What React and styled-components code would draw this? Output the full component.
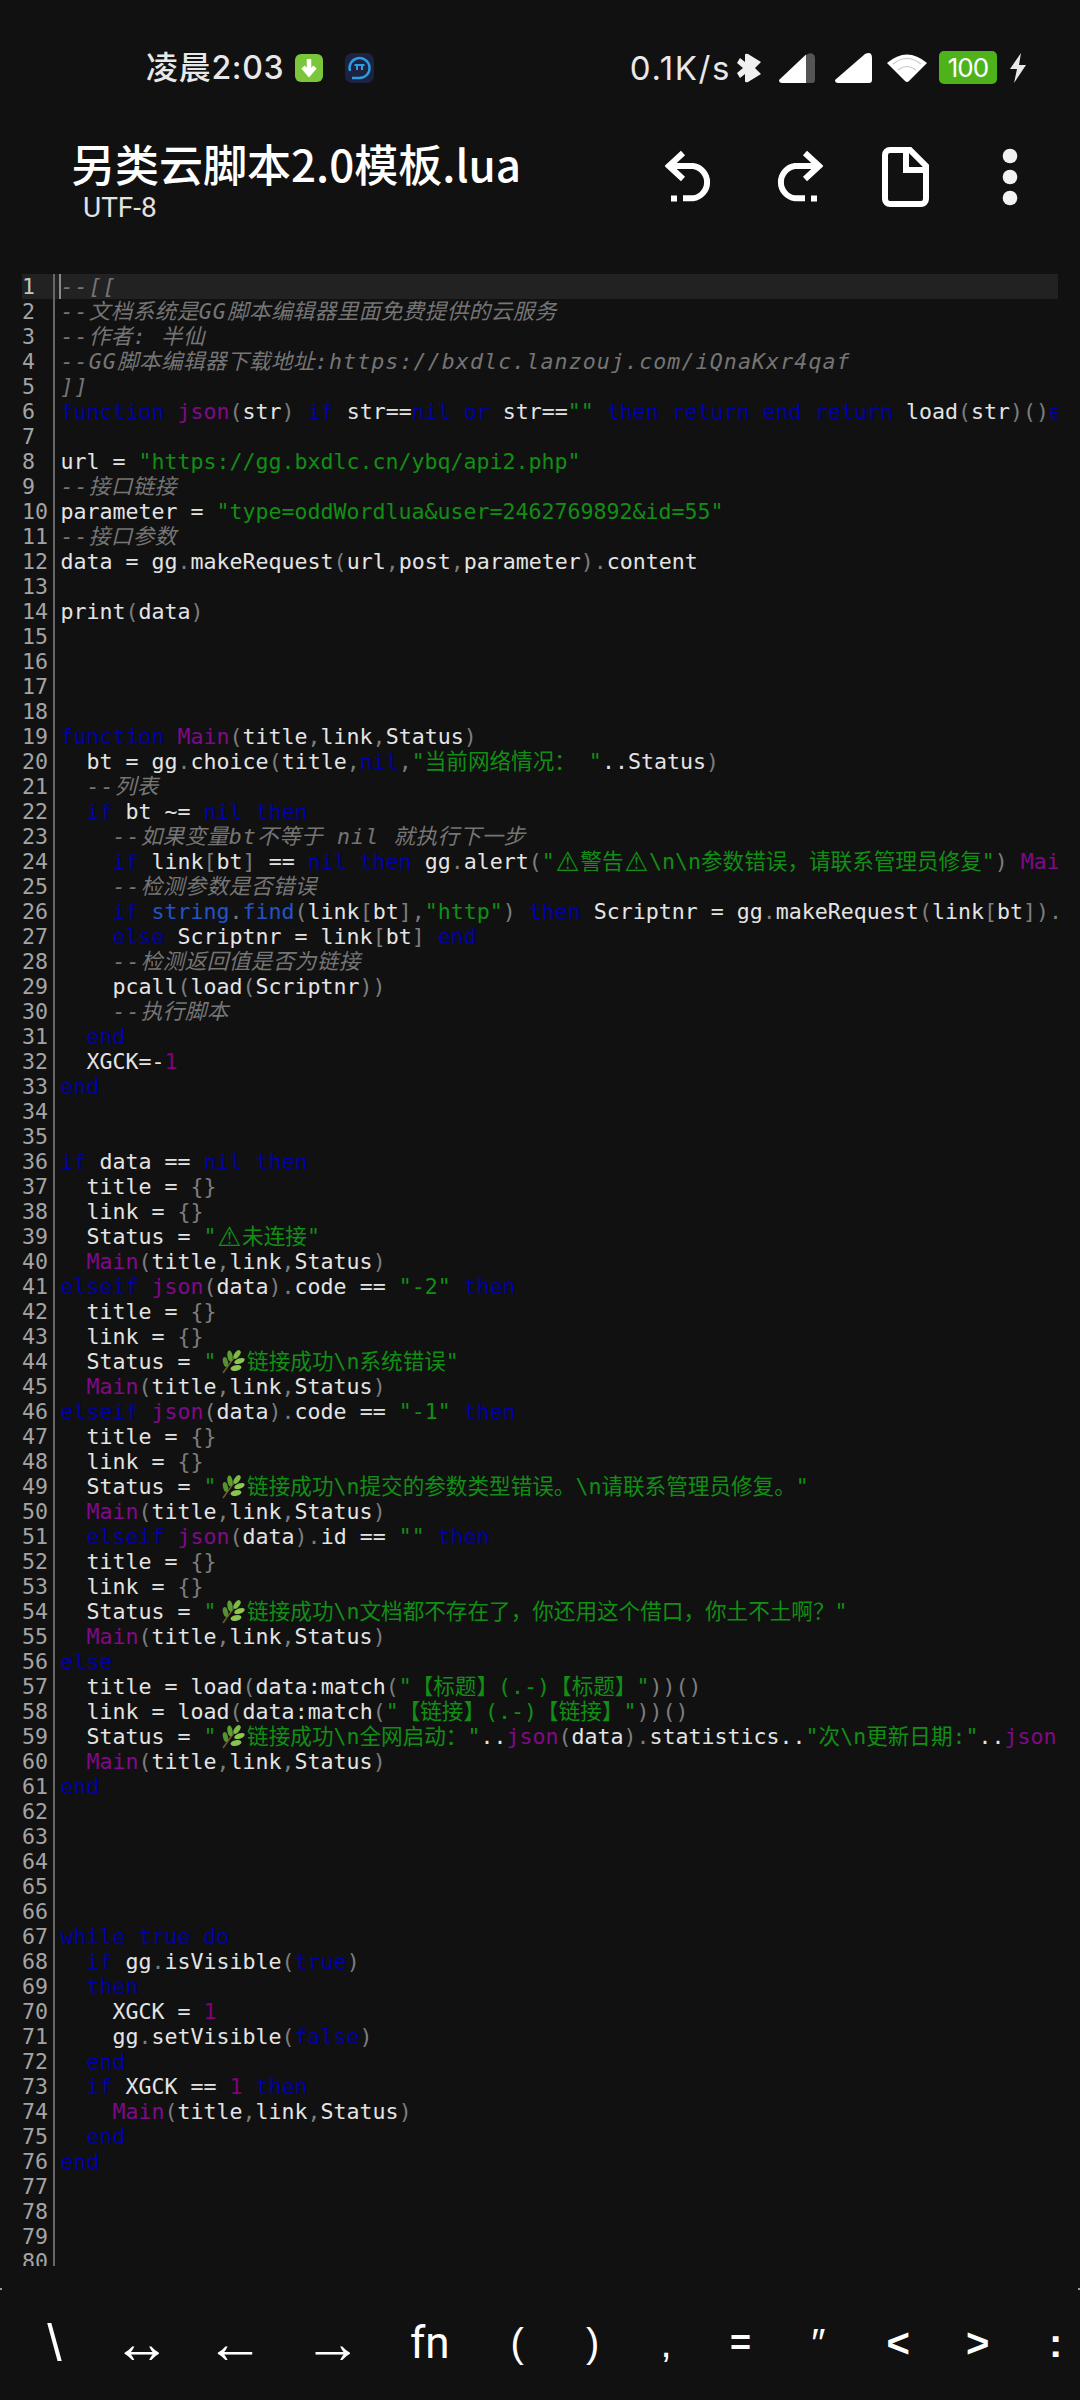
import React from 'react';
import styled, { createGlobalStyle } from 'styled-components';

const Global = createGlobalStyle`
html, body { margin: 0; padding: 0; background: #111111; }
`

const SOURCE = String.raw`--[[
--文档系统是GG脚本编辑器里面免费提供的云服务
--作者: 半仙
--GG脚本编辑器下载地址:https://bxdlc.lanzouj.com/iQnaKxr4qaf
]]
function json(str) if str==nil or str=="" then return end return load(str)()end

url = "https://gg.bxdlc.cn/ybq/api2.php"
--接口链接
parameter = "type=oddWordlua&user=2462769892&id=55"
--接口参数
data = gg.makeRequest(url,post,parameter).content

print(data)




function Main(title,link,Status)
  bt = gg.choice(title,nil,"当前网络情况： "..Status)
  --列表
  if bt ~= nil then
    --如果变量bt不等于 nil 就执行下一步
    if link[bt] == nil then gg.alert("⚠警告⚠\n\n参数错误，请联系管理员修复") Main(title,link,Status) end
    --检测参数是否错误
    if string.find(link[bt],"http") then Scriptnr = gg.makeRequest(link[bt]).content
    else Scriptnr = link[bt] end
    --检测返回值是否为链接
    pcall(load(Scriptnr))
    --执行脚本
  end
  XGCK=-1
end


if data == nil then
  title = {}
  link = {}
  Status = "⚠未连接"
  Main(title,link,Status)
elseif json(data).code == "-2" then
  title = {}
  link = {}
  Status = "🌿链接成功\n系统错误"
  Main(title,link,Status)
elseif json(data).code == "-1" then
  title = {}
  link = {}
  Status = "🌿链接成功\n提交的参数类型错误。\n请联系管理员修复。"
  Main(title,link,Status)
  elseif json(data).id == "" then
  title = {}
  link = {}
  Status = "🌿链接成功\n文档都不存在了，你还用这个借口，你土不土啊？"
  Main(title,link,Status)
else
  title = load(data:match("【标题】(.-)【标题】"))()
  link = load(data:match("【链接】(.-)【链接】"))()
  Status = "🌿链接成功\n全网启动："..json(data).statistics.."次\n更新日期:"..json(data).date
  Main(title,link,Status)
end





while true do
  if gg.isVisible(true)
  then
    XGCK = 1
    gg.setVisible(false)
  end
  if XGCK == 1 then
    Main(title,link,Status)
  end
end



`.split('\n');

const KEYWORDS = new Set(['function', 'if', 'or', 'then', 'return', 'end', 'else', 'elseif', 'nil', 'true', 'false', 'while', 'do']);
const FUNCS = new Set(['json', 'Main']);
const LIBS = new Set(['string', 'find']);
const TOKEN_RE = /\s+|--.*|"[^"]*"|\d+|[A-Za-z_]\w*|\.\.|~=|=+|[()[\]{},.]|./gu;

const tokenize = (line, index) => {
    if (index < 5) return [{ kind: 'comment', text: line }];
    return (line.match(TOKEN_RE) || []).map((text) => {
        if (text.startsWith('--')) return { kind: 'comment', text };
        if (text.startsWith('"')) return { kind: 'string', text };
        if (/^\d/.test(text)) return { kind: 'number', text };
        if (KEYWORDS.has(text)) return { kind: 'keyword', text };
        if (FUNCS.has(text)) return { kind: 'func', text };
        if (LIBS.has(text)) return { kind: 'lib', text };
        if (/^[()[\]{},.]$/.test(text)) return { kind: 'punct', text };
        return { kind: 'plain', text };
    });
};

const COLORS = {
    comment: '#757575',
    string: '#118f15',
    number: '#800080',
    keyword: '#0000a8',
    func: '#800a88',
    lib: '#2453c4',
    punct: '#7d7d7d',
    plain: '#e4e4e4',
};

const Page = styled.div`
display: flex;
flex-direction: column;
width: 1080px;
height: 2400px;
overflow: hidden;
background: #111111;
`

const StatusBar = styled.div`
display: flex;
align-items: center;
height: 135px;
flex-shrink: 0;
padding: 0 53px 0 146px;
box-sizing: border-box;
color: #e8e8e8;
`

const Clock = styled.span`
font: 500 32px/40px Inter, "Noto Sans CJK SC", sans-serif;
letter-spacing: 0.7px;
margin-right: 11px;
white-space: nowrap;
`

const AppBadge = styled.svg`
display: block;
margin-right: ${p => p.$gap}px;
`

const StatusRight = styled.div`
display: flex;
align-items: center;
margin-left: auto;
`

const Speed = styled.span`
font: 400 33px/40px Inter, sans-serif;
letter-spacing: 1.6px;
margin-right: 6px;
white-space: nowrap;
`

const StatusIcon = styled.svg`
display: block;
margin-right: ${p => p.$gap}px;
`

const Battery = styled.div`
width: 58px;
height: 33px;
border-radius: 5px;
background: #4eb31b;
color: #ffffff;
font: 400 26px/33px Inter, sans-serif;
letter-spacing: -1px;
text-align: center;
margin-right: 12px;
`

const Toolbar = styled.div`
display: flex;
align-items: flex-start;
height: 139px;
flex-shrink: 0;
padding: 3px 16px 0 71px;
box-sizing: border-box;
`

const TitleBlock = styled.div`
display: flex;
flex-direction: column;
`

const Title = styled.div`
font: 500 44px/50px "Noto Sans CJK SC", sans-serif;
color: #ffffff;
white-space: nowrap;
`

const Subtitle = styled.div`
font: 400 28px/36px Roboto, sans-serif;
color: #e2e2e2;
margin: 2px 0 0 12px;
`

const Actions = styled.div`
display: flex;
align-items: center;
height: 78px;
margin-left: auto;
`

const ActionSlot = styled.div`
display: flex;
justify-content: center;
width: ${p => p.$w}px;
`

const Editor = styled.div`
flex: 1;
min-height: 0;
display: flex;
flex-direction: column;
margin: 0 22px 22px 22px;
overflow: hidden;
font: 400 21.6px/25px "DejaVu Sans Mono", "Noto Sans CJK SC", monospace;
`

const Row = styled.div`
display: flex;
flex-shrink: 0;
height: 25px;
background: ${p => (p.$active ? '#222222' : 'transparent')};
`

const LineNo = styled.div`
width: 31px;
flex-shrink: 0;
border-right: 2px solid #666666;
color: ${p => (p.$active ? '#c4c4c4' : '#a4a4a4')};
`

const Code = styled.div`
position: relative;
flex: 1;
min-width: 0;
padding-left: 5.5px;
overflow: hidden;
white-space: pre;
&::before {
  content: '';
  display: ${p => (p.$active ? 'block' : 'none')};
  position: absolute;
  left: 4px;
  top: 0;
  width: 2px;
  height: 25px;
  background: #8a8a8a;
}
`

const Token = styled.span`
color: ${p => COLORS[p.$kind]};
font-style: ${p => (p.$kind === 'comment' ? 'italic' : 'normal')};
letter-spacing: ${p => (p.$kind === 'comment' ? '1.1px' : 'normal')};
`

const CommentCjk = styled.span`
letter-spacing: 0.4px;
`

const Warn = styled.span`
display: inline-block;
width: 25.5px;
text-align: center;
font-family: "DejaVu Sans", sans-serif;
font-size: 27px;
line-height: 25px;
vertical-align: top;
`

const LeafBox = styled.svg`
display: inline-block;
width: 30.5px;
height: 25px;
vertical-align: top;
`

const KeyBar = styled.div`
position: relative;
display: flex;
align-items: center;
flex-shrink: 0;
height: 112px;
padding: 0 0 2px 11px;
box-sizing: border-box;
overflow: hidden;
color: #ffffff;
&::before, &::after {
  content: '';
  position: absolute;
  top: 0;
  width: 2px;
  height: 2px;
  background: #9a9a9a;
}
&::before { left: 0; }
&::after { right: 0; }
`

const Key = styled.div`
flex-shrink: 0;
width: ${p => p.$w}px;
text-align: center;
font-family: ${p => (p.$round ? 'Roboto' : '"Liberation Sans"')}, sans-serif;
font-size: ${p => p.$size || 40}px;
font-weight: ${p => p.$weight || 400};
line-height: 50px;
`

const Leaf = () => (
    <LeafBox viewBox="0 0 30.5 25">
        <path d="M6 24 C10 18 14 12 22 3" stroke="#6b5a2a" strokeWidth="1.6" fill="none" />
        <ellipse cx="20" cy="5.5" rx="2.6" ry="5" transform="rotate(35 20 5.5)" fill="#7dbb46" />
        <ellipse cx="13" cy="7" rx="2.6" ry="5.5" transform="rotate(-10 13 7)" fill="#5f9e35" />
        <ellipse cx="22.5" cy="12" rx="2.6" ry="5.5" transform="rotate(70 22.5 12)" fill="#8cc750" />
        <ellipse cx="8.5" cy="13" rx="2.5" ry="5" transform="rotate(-15 8.5 13)" fill="#578f30" />
        <ellipse cx="19" cy="19" rx="2.8" ry="5.5" transform="rotate(80 19 19)" fill="#88c44e" />
    </LeafBox>
);

const StringToken = ({ text }) => (
    <Token $kind="string">
        {text.split(/(🌿|⚠)/u).map((part, i) => {
            if (part === '🌿') return <Leaf key={i} />;
            if (part === '⚠') return <Warn key={i}>⚠</Warn>;
            return part;
        })}
    </Token>
);

// comment latin runs sit wider than the cjk ones in the reference
const CommentToken = ({ text }) => (
    <Token $kind="comment">
        {text.split(/([\u3000-\u9fff\uff00-\uffef]+)/u).map((part, i) => (
            i % 2 ? <CommentCjk key={i}>{part}</CommentCjk> : part
        ))}
    </Token>
);

const CodeLine = ({ line, index }) => (
    <Row $active={index === 0}>
        <LineNo $active={index === 0}>{index + 1}</LineNo>
        <Code $active={index === 0}>
            {tokenize(line, index).map((t, i) => {
                if (t.kind === 'string') return <StringToken key={i} text={t.text} />;
                if (t.kind === 'comment') return <CommentToken key={i} text={t.text} />;
                return <Token key={i} $kind={t.kind}>{t.text}</Token>;
            })}
        </Code>
    </Row>
);

const KEYS = [
    { label: '\\', w: 87, size: 52 },
    { label: '↔', w: 87.5, size: 58 },
    { label: '←', w: 99, size: 58 },
    { label: '→', w: 96.5, size: 58 },
    { label: 'fn', w: 97.5, round: true, size: 44 },
    { label: '(', w: 77.5 },
    { label: ')', w: 73.5 },
    { label: ',', w: 73 },
    { label: '=', w: 76, size: 36, weight: 700 },
    { label: '″', w: 79.5, size: 40 },
    { label: '<', w: 80.5, size: 40, weight: 700 },
    { label: '>', w: 78.5, size: 40, weight: 700 },
    { label: ':', w: 77.5, weight: 700 },
];

const Undo = ({ flip }) => (
    <svg width="48" height="54" viewBox="0 0 48 54" style={flip ? { transform: 'scaleX(-1)' } : undefined}>
        <path d="M18 3 L4 16 L18 29 M4 16 H28 A16.3 16.3 0 0 1 28 48.3 H18" fill="none" stroke="#fff" strokeWidth="6" />
        <rect x="6" y="45.5" width="6" height="6" fill="#fff" />
    </svg>
);

export default function App() {
    return (
        <Page>
            <Global />
            <StatusBar>
                <Clock>凌晨2:03</Clock>
                <AppBadge $gap={22} width="28" height="28" viewBox="0 0 28 28">
                    <rect width="28" height="28" rx="6" fill="#7cc63c" />
                    <path d="M14 5 V18 M8 13 L14 20 L20 13" fill="none" stroke="#fff" strokeWidth="4.5" />
                </AppBadge>
                <AppBadge $gap={0} width="29" height="30" viewBox="0 0 29 30">
                    <rect width="29" height="30" rx="7" fill="#1b2340" />
                    <path d="M5 18 A10 10 0 1 1 14.5 25 H7" fill="none" stroke="#2f9be0" strokeWidth="2.4" />
                    <path d="M9.5 12 H19.5 M12 12 V17 M17 12 V17" fill="none" stroke="#2f9be0" strokeWidth="2" />
                </AppBadge>
                <StatusRight>
                    <Speed>0.1K/s</Speed>
                    <StatusIcon $gap={17} width="25" height="30" viewBox="0 0 25 30">
                        <path d="M8 2 Q8 0 11 1 L24 9 L18 15 L24 21 L11 29 Q8 30 8 28 V21 L3 25 L0 20 L6 15 L0 10 L3 5 L8 9 Z" fill="#f0f0f0" />
                    </StatusIcon>
                    <StatusIcon $gap={20} width="36" height="30" viewBox="0 0 36 30">
                        <path d="M27 1.5 L0 27 Q0 30 3 30 H27 Z" fill="#ffffff" />
                        <path d="M27 2 Q31 -1 34 1 Q36 2 36 5 V27 Q36 30 33 30 H27 Z" fill="#555555" />
                    </StatusIcon>
                    <StatusIcon $gap={15} width="37" height="30" viewBox="0 0 37 30">
                        <path d="M30 1 Q37 -2 37 5 V27 Q37 30 34 30 H3 Q0 30 0 27 Z" fill="#ffffff" />
                    </StatusIcon>
                    <StatusIcon $gap={12} width="40" height="29" viewBox="0 0 40 29">
                        <path d="M0 10 Q20 -7 40 10 L22 28 Q20 30 18 28 Z" fill="#ffffff" />
                        <path d="M6 11 Q20 0 34 11 M11 17 Q20 10 29 17" fill="none" stroke="#c4c4c4" strokeWidth="1.2" />
                    </StatusIcon>
                    <Battery>100</Battery>
                    <StatusIcon $gap={0} width="18" height="30" viewBox="0 0 18 30">
                        <path d="M12 0 L1 16 L8 16 L5 30 L17 12 L10 12 Z" fill="#e8e8e8" />
                    </StatusIcon>
                </StatusRight>
            </StatusBar>
            <Toolbar>
                <TitleBlock>
                    <Title>另类云脚本2.0模板.lua</Title>
                    <Subtitle>UTF-8</Subtitle>
                </TitleBlock>
                <Actions>
                    <ActionSlot $w={110}><Undo /></ActionSlot>
                    <ActionSlot $w={110}><Undo flip /></ActionSlot>
                    <ActionSlot $w={102}>
                        <svg width="47" height="60" viewBox="0 0 47 60">
                            <path d="M8 3 H28 L44 19 V52 A5 5 0 0 1 39 57 H8 A5 5 0 0 1 3 52 V8 A5 5 0 0 1 8 3 Z M24 3 V23 H44" fill="none" stroke="#fff" strokeWidth="6" />
                        </svg>
                    </ActionSlot>
                    <ActionSlot $w={108}>
                        <svg width="16" height="58" viewBox="0 0 16 58">
                            <circle cx="8" cy="8" r="7.3" fill="#f2f2f2" />
                            <circle cx="8" cy="29" r="7.3" fill="#f2f2f2" />
                            <circle cx="8" cy="50" r="7.3" fill="#f2f2f2" />
                        </svg>
                    </ActionSlot>
                </Actions>
            </Toolbar>
            <Editor>
                {SOURCE.map((line, i) => <CodeLine key={i} line={line} index={i} />)}
            </Editor>
            <KeyBar>
                {KEYS.map((k) => (
                    <Key key={k.label} $w={k.w} $size={k.size} $round={k.round} $weight={k.weight}>{k.label}</Key>
                ))}
            </KeyBar>
        </Page>
    );
}
